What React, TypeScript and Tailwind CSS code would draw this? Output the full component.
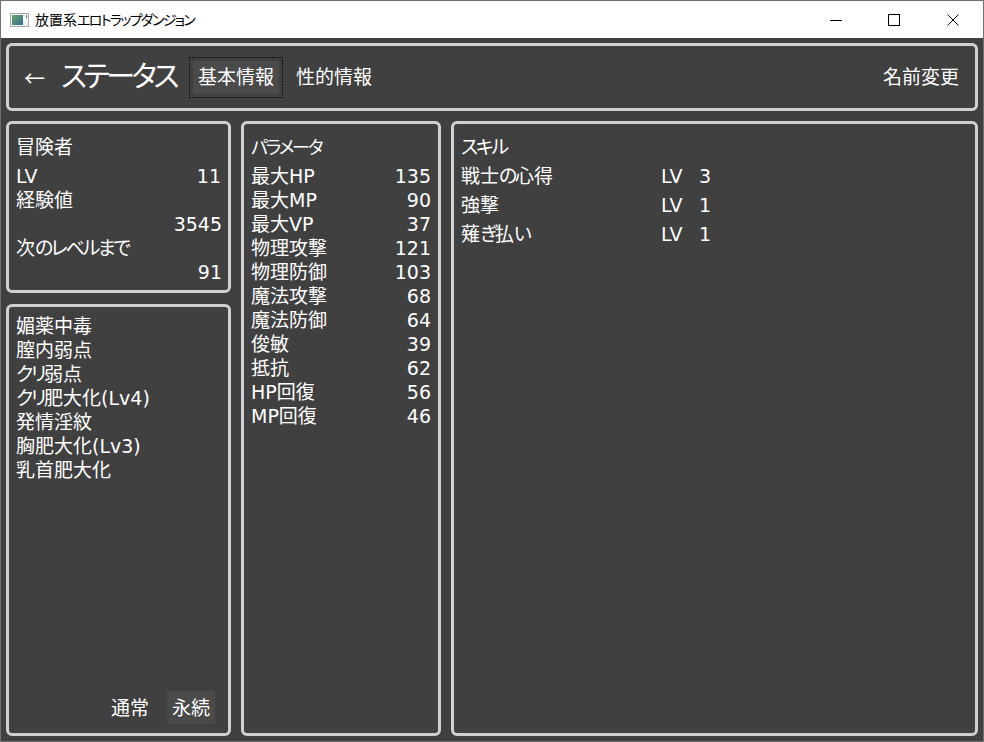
const PARAMS: [string, number][] = [
  ['最大HP', 135], ['最大MP', 90], ['最大VP', 37], ['物理攻撃', 121], ['物理防御', 103], ['魔法攻撃', 68],
  ['魔法防御', 64], ['俊敏', 39], ['抵抗', 62], ['HP回復', 56], ['MP回復', 46],
]
const SKILLS: [string, number][] = [['戦士の心得', 3], ['強撃', 1], ['薙ぎ払い', 1]]
const TRAITS = ['媚薬中毒', '膣内弱点', 'クリ弱点', 'クリ肥大化(Lv4)', '発情淫紋', '胸肥大化(Lv3)', '乳首肥大化']

const panel = 'border-[3px] border-[#d0d0d0] rounded-[6px]'

// the original font has narrow kana, so use proportional kana and leave kanji full width
function T({ s }: { s: string }) {
  return (
    <>
      {s.split(/([ぁ-んァ-ヶー]+)/).map((part, i) =>
        /^[ぁ-んァ-ヶー]/.test(part) ? (
          <span key={i} className="[font-feature-settings:'palt'] tracking-[-0.12em]">{part}</span>
        ) : (
          part
        ),
      )}
    </>
  )
}

function AppIcon() {
  return (
    <svg width="19" height="14" viewBox="0 0 19 14">
      <rect x="0.5" y="0.5" width="18" height="13" fill="#f2f2f2" stroke="#a8a8a8" />
      <defs>
        <linearGradient id="ic" x1="0" y1="0" x2="1" y2="1">
          <stop offset="0" stopColor="#6fa56f" />
          <stop offset="1" stopColor="#2f6f8f" />
        </linearGradient>
      </defs>
      <rect x="2" y="2" width="11" height="10" fill="url(#ic)" />
      <rect x="16" y="2" width="1" height="3" fill="#5a8a9a" />
    </svg>
  )
}

export default function App() {
  return (
    <div className="w-[984px] h-[742px] flex flex-col bg-[#404040] border border-[#707070] text-white text-[19px] leading-[24px] overflow-hidden" style={{ fontFamily: '"DejaVu Sans", "Noto Sans CJK JP", sans-serif' }}>
      {/* title bar */}
      <div className="h-[37px] flex items-center bg-white text-black shrink-0">
        <div className="ml-[9px] w-[25px]"><AppIcon /></div>
        <span className="text-[14px] leading-none"><T s="放置系エロトラップダンジョン" /></span>
        <div className="ml-auto flex items-center text-black">
          <div className="w-[46px] flex justify-center">
            <svg width="12" height="12" viewBox="0 0 12 12"><path d="M0 6.5H12" stroke="#000" strokeWidth="1" /></svg>
          </div>
          <div className="w-[46px] ml-[12px] flex justify-center">
            <svg width="12" height="12" viewBox="0 0 12 12"><rect x="0.5" y="0.5" width="11" height="11" fill="none" stroke="#000" /></svg>
          </div>
          <div className="w-[46px] ml-[13px] mr-[7px] flex justify-center">
            <svg width="12" height="12" viewBox="0 0 12 12"><path d="M0.5 0.5L11.5 11.5M11.5 0.5L0.5 11.5" stroke="#000" /></svg>
          </div>
        </div>
      </div>

      <div className="flex-1 flex flex-col pt-[5px] px-[5px] pb-[5px] gap-[10px] min-h-0">
        {/* header */}
        <div className={`${panel} h-[68px] shrink-0 flex items-center pl-[15px] pr-[16px]`}>
          <span className="text-[21px] w-[37px] leading-none" style={{ fontFamily: '"Noto Sans CJK JP", sans-serif' }}>←</span>
          <span className="text-[29px] leading-none mr-[13px]"><T s="ステータス" /></span>
          <div className="border border-dotted border-black p-[3px]">
            <div className="bg-[#4a4a4a] h-[33px] w-[86px] flex items-center justify-center">基本情報</div>
          </div>
          <span className="ml-[13px]">性的情報</span>
          <span className="ml-auto">名前変更</span>
        </div>

        <div className="flex-1 flex gap-[10px] min-h-0">
          {/* left column */}
          <div className="w-[225px] flex flex-col gap-[11px] shrink-0">
            <div className={`${panel} h-[172px] pl-[7px] pr-[6px] pt-[11px]`}>
              <div className="h-[29px]">冒険者</div>
              <div className="flex justify-between"><span>LV</span><span className="mr-[1px]">11</span></div>
              <div>経験値</div>
              <div className="text-right">3545</div>
              <div><T s="次のレベルまで" /></div>
              <div className="text-right">91</div>
            </div>
            <div className={`${panel} flex-1 flex flex-col pl-[7px] pr-[13px] pt-[7px] pb-[9px]`}>
              {TRAITS.map((t) => <div key={t}><T s={t} /></div>)}
              <div className="mt-auto flex items-center justify-end gap-[18px]">
                <span>通常</span>
                <div className="bg-[#4a4a4a] h-[33px] w-[48px] flex items-center justify-center">永続</div>
              </div>
            </div>
          </div>

          {/* parameters */}
          <div className={`${panel} w-[200px] shrink-0 pl-[7px] pr-[7px] pt-[11px]`}>
            <div className="text-[18px] h-[29px] pt-[1px]"><T s="パラメータ" /></div>
            {PARAMS.map(([k, v]) => (
              <div key={k} className="flex justify-between"><span>{k}</span><span>{v}</span></div>
            ))}
          </div>

          {/* skills */}
          <div className={`${panel} flex-1 pl-[7px] pt-[11px]`}>
            <div className="h-[29px]"><T s="スキル" /></div>
            {SKILLS.map(([k, v]) => (
              <div key={k} className="flex h-[29px]">
                <span className="w-[200px]"><T s={k} /></span>
                <span className="w-[38px]">LV</span>
                <span>{v}</span>
              </div>
            ))}
          </div>
        </div>
      </div>
    </div>
  )
}
